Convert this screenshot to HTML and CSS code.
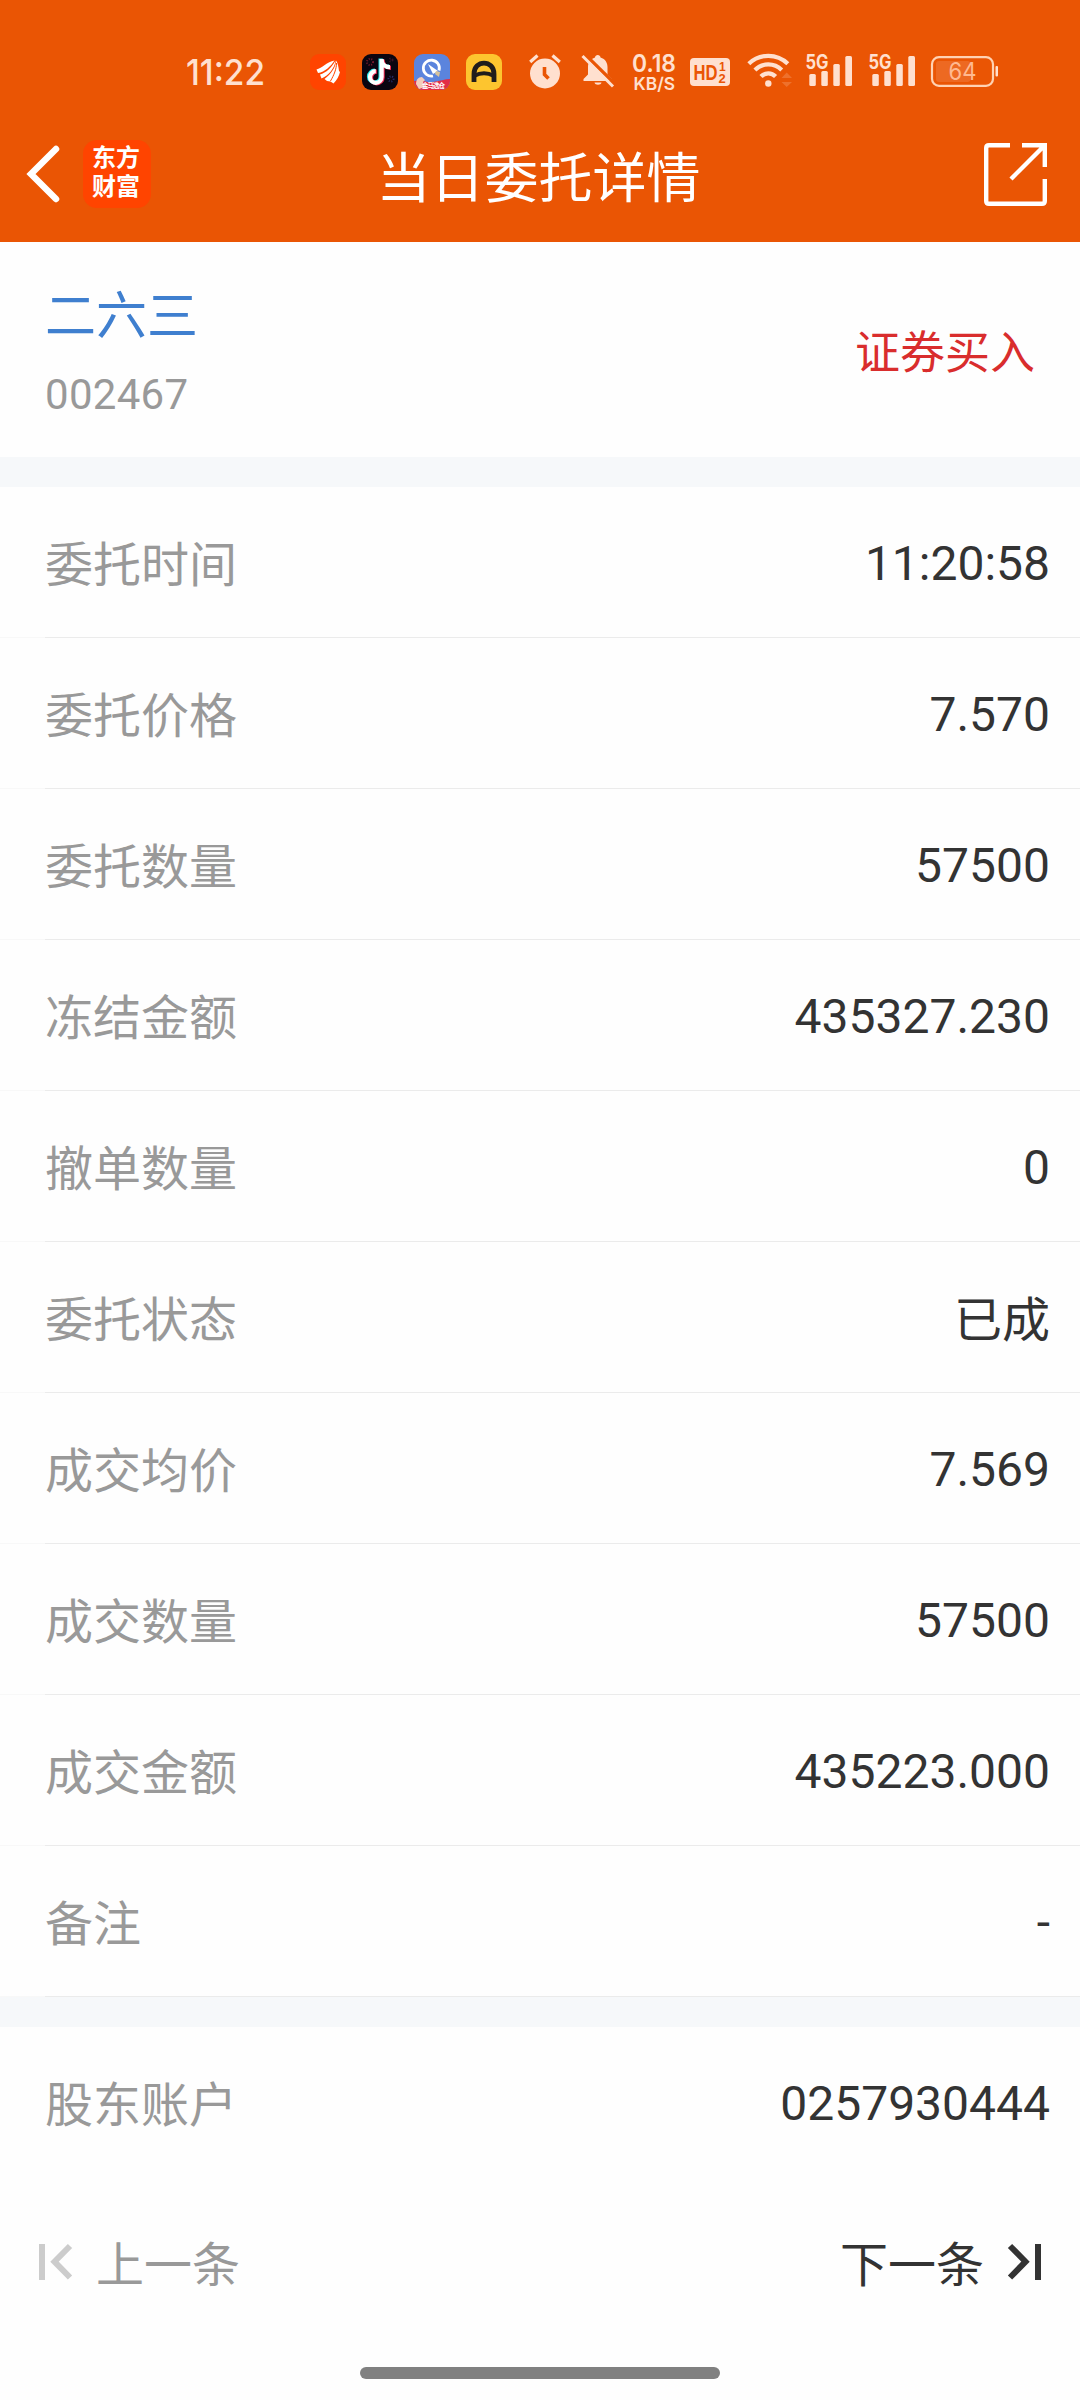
FILE: index.html
```html
<!DOCTYPE html>
<html lang="zh-CN">
<head>
    <meta charset="UTF-8">
    <meta name="viewport" content="width=device-width, initial-scale=1.0">
    <title>当日委托详情</title>
    <link rel="stylesheet" href="styles.css">
</head>
<body>
    <header>
        <div class="status-bar">
            <svg class="clock" width="80" height="36" viewBox="0 0 80 36">
                <text x="0" y="30.5" font-size="36" textLength="79" lengthAdjust="spacingAndGlyphs">11:22</text>
            </svg>
            <div class="apps">
                <svg width="36" height="36" viewBox="0 0 36 36">
                    <rect width="36" height="36" rx="9" fill="#ff4400"/>
                    <g fill="#fff">
                        <path d="M6.5 15.5C12 14 17 8 24.500 6.5C21 12 15 18 8 19Z"/>
                        <path d="M10 20.500C16 19 22 13 25.5 6.5C25 14 18 22 11.5 24.500Z"/>
                        <path d="M14.500 25C21 20 26 13 26 6.5C28 9 28.5 13 29 17L30 18C29 22 27 26 23.500 29.5L20.500 27.500L17 27Z"/>
                    </g>
                    <path d="M20.500 27C24 21 26.500 15 26.500 9" fill="none" stroke="#ff4400"/>
                </svg>
                <svg width="36" height="36" viewBox="0 0 36 36">
                    <rect width="36" height="36" rx="9" fill="#0b0510"/>
                    <g fill="none" stroke-dasharray="1 1.5" stroke-width="2">
                        <circle cx="8" cy="8" r="3" stroke="#7a1a2c"/>
                        <circle cx="29" cy="25" r="2.5" stroke="#27306e"/>
                        <circle cx="29" cy="6" r="1.5" stroke="#401426"/>
                    </g>
                    <g fill="none" stroke-width="4.2">
                        <path d="M18.6 4.5V22.5A5.8 5.8 0 1 1 12.8 16.7M18.6 4.5C18.6 9.5 22 12.6 27 12.6" stroke="#25e5e8"/>
                        <path d="M20.6 5.8V23.5A5.8 5.8 0 1 1 14.8 17.7M20.6 5.5C20.6 10.5 24 13.8 29 13.8" stroke="#f52b54"/>
                        <path d="M19.6 5V23A5.8 5.8 0 1 1 13.8 17.2M19.6 5C19.6 10 23 13.2 28 13.2" stroke="#fff"/>
                    </g>
                </svg>
                <svg width="36" height="36" viewBox="0 0 36 36">
                    <rect width="36" height="36" rx="9" fill="#5b84dd"/>
                    <path d="M0 27C8 25 12 29 19 28C26 27 31 25 36 25V27A9 9 0 0 1 27 36H9A9 9 0 0 1 0 27Z" fill="#e32d45"/>
                    <path d="M2 30C2 26 4 23 8 23L11 26L9 28L11 33L5 35Z" fill="#f3cdbb"/>
                    <path d="M19 22A8 8 0 1 1 25 16.500" fill="none" stroke="#fff" stroke-width="2.8"/>
                    <path d="M14 10L24 17L19 20Z" fill="#fff"/>
                    <path d="M22 17L26 18L25 23L21 20Z" fill="#d7c29b"/>
                    <text class="app-tag" x="8" y="33.500" font-size="6.500" textLength="23">金马选仓</text>
                </svg>
                <svg width="36" height="36" viewBox="0 0 36 36">
                    <rect width="36" height="36" rx="9" fill="#fdc52f"/>
                    <path d="M8 28V20C8 5.500 28 5.500 28 20V28" fill="none" stroke="#201d1c" stroke-width="4.800"/>
                    <path d="M9 21.500C14 18.500 22 18.500 27 21.500" fill="none" stroke="#201d1c" stroke-width="4"/>
                </svg>
            </div>
            <svg class="alarm" width="32" height="36" viewBox="0 0 32 36">
                <circle cx="16" cy="19.500" r="15"/>
                <path d="M1.200 8L8.500 1.500M30.800 8L23.500 1.500" stroke="#ffe0cf" stroke-width="3.200"/>
                <path d="M15.500 13V20.500L19.500 24.500" fill="none" stroke="#ea5504" stroke-width="3.600"/>
            </svg>
            <svg class="bell" width="34" height="36" viewBox="0 0 34 36">
                <path d="M14 3.500C14 0 19.500 0 19.500 3.500C24.500 5 26.500 9 26.500 13V20.500L31 25V27H2.500V25L7 20.500V13C7 8.500 9.500 5 14 3.500Z"/>
                <path d="M13.500 28.500H20.500C20 31.500 14 31.500 13.500 28.500Z"/>
                <path d="M3.500 0L35 31" stroke="#ea5504" stroke-width="3.500"/>
                <path d="M1.500 2L32 32.500" stroke="#ffe0cf" stroke-width="3"/>
            </svg>
            <svg class="speed" width="44" height="38" viewBox="0 0 44 38">
                <text x="0" y="18.300" font-size="24" textLength="44" lengthAdjust="spacingAndGlyphs">0.18</text>
                <text x="1.500" y="35.500" font-size="17.500" textLength="41.500" lengthAdjust="spacingAndGlyphs">KB/S</text>
            </svg>
            <svg class="hd" width="40" height="36" viewBox="0 0 40 36">
                <rect y="4" width="40" height="28" rx="4"/>
                <g class="hd-text">
                    <text x="3.500" y="26" font-size="22" textLength="24" lengthAdjust="spacingAndGlyphs">HD</text>
                    <text x="29" y="16.500" font-size="12">1</text>
                    <text x="28.500" y="28.500" font-size="13">2</text>
                </g>
            </svg>
            <svg class="wifi" width="44" height="36" viewBox="0 0 44 36">
                <circle cx="20.300" cy="29.500" r="3.200"/>
                <g fill="none" stroke="#ffe0cf" stroke-width="4.200">
                    <path d="M.8 9.700A28 28 0 0 1 39.800 9.700"/>
                    <path d="M6.900 16A19 19 0 0 1 33.700 16"/>
                    <path d="M13 22.500A10 10 0 0 1 27.600 22.500"/>
                </g>
                <path d="M33.500 24L38.700 18.500L44 24ZM33.500 28L38.700 33L44 28Z" opacity=".2"/>
            </svg>
            <svg class="signal" width="47" height="36" viewBox="0 0 47 36">
                <text x="-.5" y="15" font-size="19.500" textLength="23" lengthAdjust="spacingAndGlyphs">5G</text>
                <rect x="3.300" y="20" width="6.500" height="12" rx="1.500"/>
                <rect x="15.300" y="17" width="6.500" height="15" rx="1.500"/>
                <rect x="27.300" y="10" width="6.500" height="22" rx="1.500"/>
                <rect x="39.300" y="2" width="6.700" height="30" rx="1.500"/>
            </svg>
            <svg class="signal" width="47" height="36" viewBox="0 0 47 36">
                <text x="-.5" y="15" font-size="19.500" textLength="23" lengthAdjust="spacingAndGlyphs">5G</text>
                <rect x="3.300" y="20" width="6.500" height="12" rx="1.500"/>
                <rect x="15.300" y="17" width="6.500" height="15" rx="1.500"/>
                <rect x="27.300" y="10" width="6.500" height="22" rx="1.500"/>
                <rect x="39.300" y="2" width="6.700" height="30" rx="1.500"/>
            </svg>
            <svg class="battery" width="67" height="36" viewBox="0 0 67 36">
                <rect x="1" y="3.200" width="61" height="28.600" rx="7" fill="none" stroke="#ffd2b3" stroke-width="2.200"/>
                <rect x="5" y="7" width="34.500" height="21" rx="3" opacity=".15"/>
                <rect x="64.500" y="12" width="2.500" height="10.500" rx="1"/>
                <text x="17.500" y="26.300" font-size="24" textLength="28" lengthAdjust="spacingAndGlyphs">64</text>
            </svg>
        </div>
        <nav>
            <div class="nav-left">
                <svg class="back" width="34" height="56" viewBox="0 0 34 56">
                    <path d="M30 3L5 28L30 53" fill="none" stroke="#fff" stroke-width="6.500" stroke-linecap="round"/>
                </svg>
                <div class="logo">东方<br>财富</div>
            </div>
            <h1>当日委托详情</h1>
            <svg class="share" width="63" height="63" viewBox="0 0 63 63">
                <path d="M26 2.200H5Q2.200 2.200 2.200 5V58Q2.200 60.800 5 60.800H58Q60.800 60.800 60.800 58V36M38 2.200H60.800V24M27 36L60 3" fill="none" stroke="#fff" stroke-width="4.400"/>
            </svg>
        </nav>
    </header>

    <section class="stock">
        <div>
            <h2>二六三</h2>
            <p>002467</p>
        </div>
        <span class="side">证券买入</span>
    </section>

    <ul class="details">
        <li><span>委托时间</span><b>11:20:58</b></li>
        <li><span>委托价格</span><b>7.570</b></li>
        <li><span>委托数量</span><b>57500</b></li>
        <li><span>冻结金额</span><b>435327.230</b></li>
        <li><span>撤单数量</span><b>0</b></li>
        <li><span>委托状态</span><b class="state">已成</b></li>
        <li><span>成交均价</span><b>7.569</b></li>
        <li><span>成交数量</span><b>57500</b></li>
        <li><span>成交金额</span><b>435223.000</b></li>
        <li><span>备注</span><b>-</b></li>
    </ul>

    <ul class="details account">
        <li><span>股东账户</span><b>0257930444</b></li>
    </ul>

    <footer>
        <a class="prev">
            <svg width="33" height="36" viewBox="0 0 33 36">
                <path d="M3 0V36M31 2L15.500 17.700L31 33.500" fill="none" stroke="#ccc" stroke-width="6"/>
            </svg>
            <span>上一条</span>
        </a>
        <a class="next">
            <span>下一条</span>
            <svg width="33" height="36" viewBox="0 0 33 36">
                <path d="M2 2L17.500 17.700L2 33.500M30 0V36" fill="none" stroke="#333" stroke-width="6"/>
            </svg>
        </a>
    </footer>
    <div class="home-bar"></div>
</body>
</html>
```

FILE: styles.css
```css
* {
    box-sizing: border-box;
}

body {
    margin: 0;
    height: 2400px;
    background: #fefefe;
    color: #333;
    font-family: Roboto, "Noto Sans CJK SC", sans-serif;
    font-size: 48px;
    display: flex;
    flex-direction: column;
}

h1, h2, p, ul {
    margin: 0;
    padding: 0;
    font-weight: normal;
}

svg {
    display: block;
    flex: none;
    overflow: visible;
}

header {
    height: 242px;
    background: #ea5504;
    color: #fff;
}

/* status bar */
.status-bar {
    display: flex;
    align-items: flex-start;
    height: 106px;
    padding: 54px 0 0 186px;
    fill: #ffe0cf;
    font-family: Inter, sans-serif;
}

.clock {
    font-weight: 500;
}

.apps {
    display: flex;
    gap: 16px;
    margin-left: 44px;
}

.app-tag {
    fill: #fff;
    font-family: "Noto Sans CJK SC", sans-serif;
    font-weight: bold;
}

.alarm {
    margin-left: 27px;
}

.bell {
    margin-left: 20px;
}

.speed {
    margin-left: 17px;
    font-weight: 600;
}

.hd {
    margin-left: 14px;
}

.hd-text {
    fill: #ea5504;
    font-family: "Liberation Sans", sans-serif;
    font-weight: bold;
}

.wifi {
    margin-left: 18px;
}

.signal {
    margin-left: 14px;
    font-weight: 700;
}

.signal + .signal {
    margin-left: 16px;
}

.battery {
    margin-left: 15px;
}

.battery text {
    fill: #ffb990;
}

/* title bar */
nav {
    display: grid;
    grid-template-columns: 1fr auto 1fr;
    align-items: center;
    height: 136px;
    padding: 0 33px 0 26px;
}

.nav-left {
    display: flex;
    align-items: center;
}

.logo {
    width: 68px;
    height: 68px;
    margin-left: 23px;
    padding: 4px 2px 0 0;
    border-radius: 14px;
    background: #ff4400;
    font-size: 24px;
    font-weight: bold;
    line-height: 29px;
    text-align: center;
}

h1 {
    padding: 11px 0 0 4px;
    font-size: 54px;
    line-height: 80px;
}

.share {
    justify-self: end;
}

/* stock */
.stock {
    display: flex;
    justify-content: space-between;
    height: 215px;
    padding: 37px 45px 0;
}

.stock h2 {
    color: #3f7fcf;
    font-size: 51px;
    line-height: 76px;
}

.stock p {
    color: #999;
    font-size: 42px;
    line-height: 50px;
    letter-spacing: .3px;
    margin-top: 15px;
}

.side {
    padding-top: 42px;
    color: #d92d2d;
    font-size: 45px;
    line-height: 66px;
}

/* order rows */
.details {
    list-style: none;
    border-top: 30px solid #f6f8fa;
}

.details li {
    display: flex;
    justify-content: space-between;
    align-items: center;
    height: 151px;
    padding: 0 30px 0 45px;
    background: linear-gradient(to right, #f8f8f8 45px, #ebebeb 45px) bottom / 100% 1px no-repeat;
}

.details span {
    padding-bottom: 4px;
    color: #999;
}

.details b {
    padding-top: 2px;
    font-weight: normal;
}

.details .state {
    padding: 0 0 4px;
}

.account li {
    background: none;
}

/* prev / next */
footer {
    display: flex;
    justify-content: space-between;
    align-items: center;
    height: 168px;
    padding: 0 39px;
}

footer a {
    display: flex;
    align-items: center;
    gap: 24px;
}

footer span {
    padding-bottom: 3px;
}

.prev {
    color: #999;
}

.home-bar {
    width: 360px;
    height: 12px;
    margin: 21px auto 0;
    border-radius: 6px;
    background: #808080;
}
```
